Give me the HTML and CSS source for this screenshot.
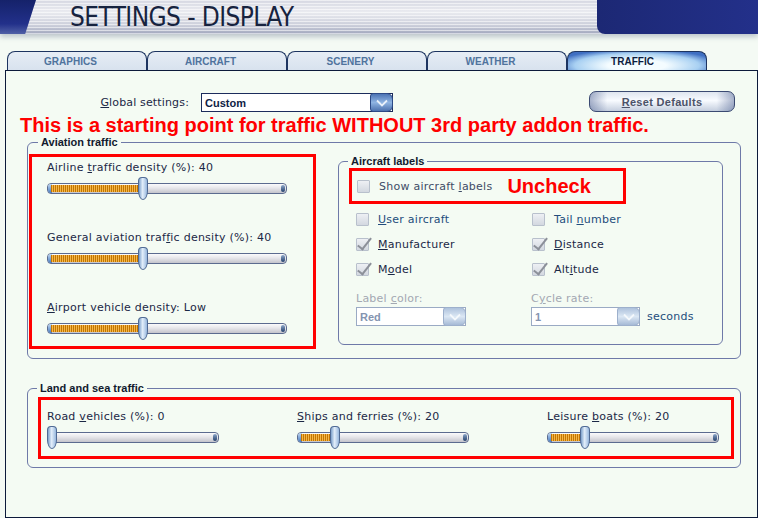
FILE: index.html
```html
<!DOCTYPE html>
<html lang="en">
<head>
    <meta charset="UTF-8">
    <title>Settings - Display</title>
    <link rel="stylesheet" href="styles.css">
</head>
<body>
    <!-- Cabecera -->
    <div class="titlebar">
        <div class="title-left"></div>
        <h1>SETTINGS - DISPLAY</h1>
        <div class="title-right"></div>
    </div>

    <!-- Pestañas -->
    <div class="tabs">
        <div class="tab">GRAPHICS</div>
        <div class="tab">AIRCRAFT</div>
        <div class="tab">SCENERY</div>
        <div class="tab">WEATHER</div>
        <div class="tab active">TRAFFIC</div>
    </div>

    <div class="panel">
        <div class="global-row">
            <label class="global-label"><u>G</u>lobal settings:</label>
            <div class="combo combo-global">
                <span class="combo-value">Custom</span>
                <span class="combo-btn"><svg width="14" height="8" viewBox="0 0 14 8"><path d="M2 1.5 L7 6.5 L12 1.5" fill="none" stroke="#e8f0fa" stroke-width="1.8"/></svg></span>
            </div>
            <button class="btn-reset"><u>R</u>eset Defaults</button>
        </div>

        <p class="notice">This is a starting point for traffic WITHOUT 3rd party addon traffic.</p>

        <fieldset class="group group-aviation">
            <legend>Aviation traffic</legend>
            <div class="aviation-body">
                <div class="mark density-list">
                    <div class="slider-item">
                        <div class="slider-label">Airline <u>t</u>raffic density (%): 40</div>
                        <div class="slider slider-wide">
                            <div class="slider-fill" style="width: 91px"></div>
                            <div class="slider-thumb" style="left: 91px"></div>
                        </div>
                    </div>
                    <div class="slider-item">
                        <div class="slider-label">General aviation traf<u>f</u>ic density (%): 40</div>
                        <div class="slider slider-wide">
                            <div class="slider-fill" style="width: 91px"></div>
                            <div class="slider-thumb" style="left: 91px"></div>
                        </div>
                    </div>
                    <div class="slider-item">
                        <div class="slider-label"><u>A</u>irport vehicle density: Low</div>
                        <div class="slider slider-wide">
                            <div class="slider-fill" style="width: 91px"></div>
                            <div class="slider-thumb" style="left: 91px"></div>
                        </div>
                    </div>
                </div>

                <fieldset class="group group-labels">
                    <legend>Aircraft labels</legend>
                    <div class="mark show-labels">
                        <div class="check-row">
                            <span class="check"></span>
                            <span class="check-text muted">Show aircraft <u>l</u>abels</span>
                            <span class="uncheck">Uncheck</span>
                        </div>
                    </div>
                    <div class="label-grid">
                        <div class="check-row"><span class="check"></span><span class="check-text blue"><u>U</u>ser aircraft</span></div>
                        <div class="check-row"><span class="check"></span><span class="check-text blue">Tail <u>n</u>umber</span></div>
                        <div class="check-row"><span class="check checked"></span><span class="check-text"><u>M</u>anufacturer</span></div>
                        <div class="check-row"><span class="check checked"></span><span class="check-text"><u>D</u>istance</span></div>
                        <div class="check-row"><span class="check checked"></span><span class="check-text">M<u>o</u>del</span></div>
                        <div class="check-row"><span class="check checked"></span><span class="check-text">Alt<u>i</u>tude</span></div>
                    </div>
                    <div class="label-grid combo-grid">
                        <div>
                            <div class="disabled-label">Label <u>c</u>olor:</div>
                            <div class="combo combo-off combo-color">
                                <span class="combo-value">Red</span>
                                <span class="combo-btn"><svg width="14" height="8" viewBox="0 0 14 8"><path d="M2 1.5 L7 6.5 L12 1.5" fill="none" stroke="#f4f8fc" stroke-width="1.8"/></svg></span>
                            </div>
                        </div>
                        <div>
                            <div class="disabled-label">C<u>y</u>cle rate:</div>
                            <div class="cycle-row">
                                <div class="combo combo-off combo-cycle">
                                    <span class="combo-value">1</span>
                                    <span class="combo-btn"><svg width="14" height="8" viewBox="0 0 14 8"><path d="M2 1.5 L7 6.5 L12 1.5" fill="none" stroke="#f4f8fc" stroke-width="1.8"/></svg></span>
                                </div>
                                <span class="seconds">seconds</span>
                            </div>
                        </div>
                    </div>
                </fieldset>
            </div>
        </fieldset>

        <fieldset class="group group-land">
            <legend>Land and sea traffic</legend>
            <div class="mark land-list">
                <div class="slider-item">
                    <div class="slider-label">Road <u>v</u>ehicles (%): 0</div>
                    <div class="slider slider-short">
                        <div class="slider-thumb" style="left: 0px"></div>
                    </div>
                </div>
                <div class="slider-item">
                    <div class="slider-label"><u>S</u>hips and ferries (%): 20</div>
                    <div class="slider slider-short">
                        <div class="slider-fill" style="width: 33px"></div>
                        <div class="slider-thumb" style="left: 33px"></div>
                    </div>
                </div>
                <div class="slider-item">
                    <div class="slider-label">Leisure <u>b</u>oats (%): 20</div>
                    <div class="slider slider-short">
                        <div class="slider-fill" style="width: 33px"></div>
                        <div class="slider-thumb" style="left: 33px"></div>
                    </div>
                </div>
            </div>
        </fieldset>
    </div>
</body>
</html>
```

FILE: styles.css
```css
* {
    box-sizing: border-box;
}
body {
    margin: 0;
    height: 518px;
    overflow: hidden;
    background-color: #f4faf4;
    font-family: "DejaVu Sans", Verdana, sans-serif;
    font-size: 11px;
    color: #1b2846;
}
u {
    text-decoration: underline;
    text-underline-offset: 1px;
}

/* Cabecera */
.titlebar {
    display: flex;
    height: 34px;
    background:
        repeating-linear-gradient(180deg, rgba(255,255,255,0.55) 0 1px, rgba(255,255,255,0) 1px 3px),
        linear-gradient(180deg, #d6d8e2 0%, #eaebf0 35%, #cbcedA 75%, #a2a8be 100%);
    box-shadow: 0 3px 5px rgba(90, 100, 130, 0.35);
}
.title-left {
    width: 36px;
    background: linear-gradient(180deg, #15226a 0%, #22308a 70%, #5060a6 100%);
    clip-path: polygon(0 0, 100% 0, 70% 100%, 0 100%);
}
.titlebar h1 {
    flex: 1;
    margin: 0;
    padding: 3px 0 0 34px;
    font-family: "DejaVu Sans Condensed", "DejaVu Sans", sans-serif;
    font-stretch: condensed;
    font-weight: normal;
    font-size: 26px;
    line-height: 28px;
    letter-spacing: -0.6px;
    color: #17233f;
}
.title-right {
    width: 161px;
    background: linear-gradient(90deg, #1c2874 0%, #23308a 100%);
    border-bottom-left-radius: 8px;
}

/* Pestañas */
.tabs {
    display: flex;
    margin-top: 17px;
    padding-left: 7px;
    height: 19px;
}
.tab {
    width: 140px;
    height: 19px;
    padding-right: 13px;
    border: 1px solid #1d3460;
    border-bottom: none;
    border-radius: 8px 8px 0 0;
    background: linear-gradient(180deg, #e6edf5 0%, #d8e2ee 100%);
    text-align: center;
    font-family: "Liberation Sans", Arial, sans-serif;
    font-weight: bold;
    font-size: 10px;
    line-height: 19px;
    color: #4f739d;
}
.tab.active {
    padding-right: 9px;
    background: radial-gradient(ellipse 60% 90% at 50% 75%, #f4fcff 35%, #a8d0f2 75%, #3f6fc2 100%);
    color: #0d1c40;
}

/* Panel principal */
.panel {
    margin-left: 5px;
    width: 753px;
    height: 448px;
    border: 1px solid #0c1a3a;
    background-color: #f4fbf3;
}
.global-row {
    display: flex;
    align-items: center;
    margin-top: 21px;
    height: 21px;
}
.global-label {
    width: 183px;
    text-align: right;
    letter-spacing: 0.15px;
}
.combo {
    position: relative;
    display: flex;
    align-items: center;
    height: 19px;
    border: 1px solid #1c2c5c;
    background-color: #fff;
}
.combo-value {
    flex: 1;
    padding-left: 3px;
    font-family: "Liberation Sans", Arial, sans-serif;
    font-weight: bold;
    font-size: 11px;
    color: #0e1d45;
}
.combo-btn {
    display: flex;
    align-items: center;
    justify-content: center;
    width: 23px;
    height: 19px;
    margin: -1px -1px -1px 0;
    border: 1px solid #2c4a86;
    border-radius: 3px 6px 6px 3px;
    background: linear-gradient(180deg, #4c74b4 0%, #8fb4e2 50%, #4d72ae 100%);
}
.combo-global {
    width: 192px;
    margin-left: 12px;
}
.btn-reset {
    margin-left: auto;
    margin-right: 22px;
    margin-top: -2px;
    width: 146px;
    height: 21px;
    border: 1px solid #3b4a72;
    border-radius: 7px;
    background:
        linear-gradient(90deg, rgba(70,90,140,0.45) 0%, rgba(255,255,255,0) 12%, rgba(255,255,255,0) 88%, rgba(70,90,140,0.45) 100%),
        linear-gradient(180deg, #dfe5ef 0%, #f8fbff 45%, #c4cede 100%);
    font-family: "Liberation Sans", Arial, sans-serif;
    font-weight: bold;
    font-size: 11px;
    letter-spacing: 0.3px;
    color: #4c5268;
    padding: 0;
}

/* Nota roja */
.notice {
    margin: 1px 0 0 14px;
    font-family: "Liberation Sans", Arial, sans-serif;
    font-weight: bold;
    font-size: 20px;
    line-height: 22px;
    color: #ff0000;
}
.mark {
    border: 3px solid #ff0000;
}

/* Grupos */
fieldset.group {
    margin: 0;
    padding: 0;
    min-width: 0;
    border: 1px solid #6e79a8;
    border-radius: 6px;
}
fieldset.group legend {
    margin-left: 9px;
    padding: 0 3px;
    font-family: "Liberation Sans", Arial, sans-serif;
    font-weight: bold;
    font-size: 11px;
    line-height: 13px;
    color: #111a2e;
}
.group-aviation {
    margin: 0 16px 0 21px !important;
    width: 714px;
    padding: 5px 0 9px 1px !important;
}
.aviation-body {
    display: flex;
    align-items: flex-start;
}
.density-list {
    width: 287px;
    padding: 4px 0 12px 15px;
}
.density-list .slider-item + .slider-item {
    margin-top: 37px;
}
.slider-label {
    height: 14px;
    line-height: 14px;
    letter-spacing: 0.25px;
    margin-bottom: 8px;
    white-space: nowrap;
}

/* Deslizadores */
.slider {
    position: relative;
    height: 11px;
    border: 1px solid #5b6b8f;
    border-radius: 4px;
    background: linear-gradient(180deg, #fbfbfc 0%, #e6e6ea 45%, #c4c4cc 100%);
}
.slider::before {
    content: "";
    position: absolute;
    left: 0;
    top: 0;
    width: 4px;
    height: 9px;
    border-radius: 3px 0 0 3px;
    background: linear-gradient(180deg, #bcd6f2, #4a7cc0);
}
.slider::after {
    content: "";
    position: absolute;
    right: 1px;
    top: 1px;
    width: 4px;
    height: 7px;
    border-radius: 2px;
    background: linear-gradient(180deg, #8aa6c8, #24406c);
}
.slider-wide {
    width: 240px;
}
.slider-short {
    width: 172px;
}
.slider-fill {
    position: absolute;
    left: 3px;
    top: 1px;
    height: 7px;
    background: repeating-linear-gradient(90deg, #c47400 0 1px, #f3b848 1px 2px);
}
.slider-thumb {
    position: absolute;
    top: -7px;
    width: 10px;
    height: 23px;
    margin-left: -1px;
    border: 1px solid #4f6a94;
    border-radius: 4px 4px 5px 5px / 4px 4px 9px 9px;
    background: linear-gradient(90deg, #7ea2cc 0%, #e2eefa 45%, #98b8de 100%);
    z-index: 1;
}

/* Etiquetas de aeronaves */
.group-labels {
    margin: 1px 0 0 22px !important;
    width: 385px;
    padding: 0 0 18px 0 !important;
}
.show-labels {
    margin-left: 10px;
    width: 277px;
    height: 36px;
    padding-left: 5px;
    display: flex;
    align-items: center;
}
.check-row {
    display: flex;
    align-items: center;
    height: 25px;
}
.show-labels .check-row {
    height: auto;
}
.check {
    position: relative;
    width: 13px;
    height: 13px;
    margin-right: 9px;
    border: 1px solid #b8c0cc;
    border-radius: 1px;
    background: linear-gradient(180deg, #eef0f4 0%, #d3d8e0 100%);
    flex: none;
}
.check.checked::after {
    content: "";
    position: absolute;
    left: 4px;
    top: -4px;
    width: 5px;
    height: 13px;
    border-right: 2px solid #8c9099;
    border-bottom: 2px solid #8c9099;
    transform: rotate(38deg);
}
.check-text {
    letter-spacing: 0.25px;
    white-space: nowrap;
}
.check-text.muted {
    color: #3e4c66;
}
.check-text.blue {
    color: #234d7c;
}
.uncheck {
    margin-left: 15px;
    font-family: "Liberation Sans", Arial, sans-serif;
    font-weight: bold;
    font-size: 20px;
    color: #ff0000;
}
.label-grid {
    display: grid;
    grid-template-columns: 176px 1fr;
    margin-top: 3px;
    padding-left: 17px;
}
.combo-grid {
    margin-top: 10px;
    grid-template-columns: 175px 1fr;
}
.disabled-label {
    height: 14px;
    line-height: 14px;
    margin-bottom: 1px;
    color: #a3a8b2;
    letter-spacing: 0.25px;
}
.combo-off {
    border-color: #9aaac4;
}
.combo-off .combo-value {
    color: #8494b0;
}
.combo-off .combo-btn {
    border-color: #9db0cc;
    background: linear-gradient(180deg, #aec2dc 0%, #dbe7f4 50%, #a6bad6 100%);
}
.combo-color {
    width: 110px;
}
.combo-cycle {
    width: 109px;
}
.cycle-row {
    display: flex;
    align-items: center;
}
.seconds {
    margin-left: 7px;
    color: #234d7c;
    letter-spacing: 0.25px;
}

/* Tráfico terrestre y marítimo */
.group-land {
    margin: 23px 16px 0 21px !important;
    width: 714px;
    padding: 2px 0 8px 0 !important;
}
.land-list {
    display: grid;
    grid-template-columns: 250px 250px 1fr;
    margin: 0 6px 0 10px;
    padding: 10px 0 13px 6px;
}
```
